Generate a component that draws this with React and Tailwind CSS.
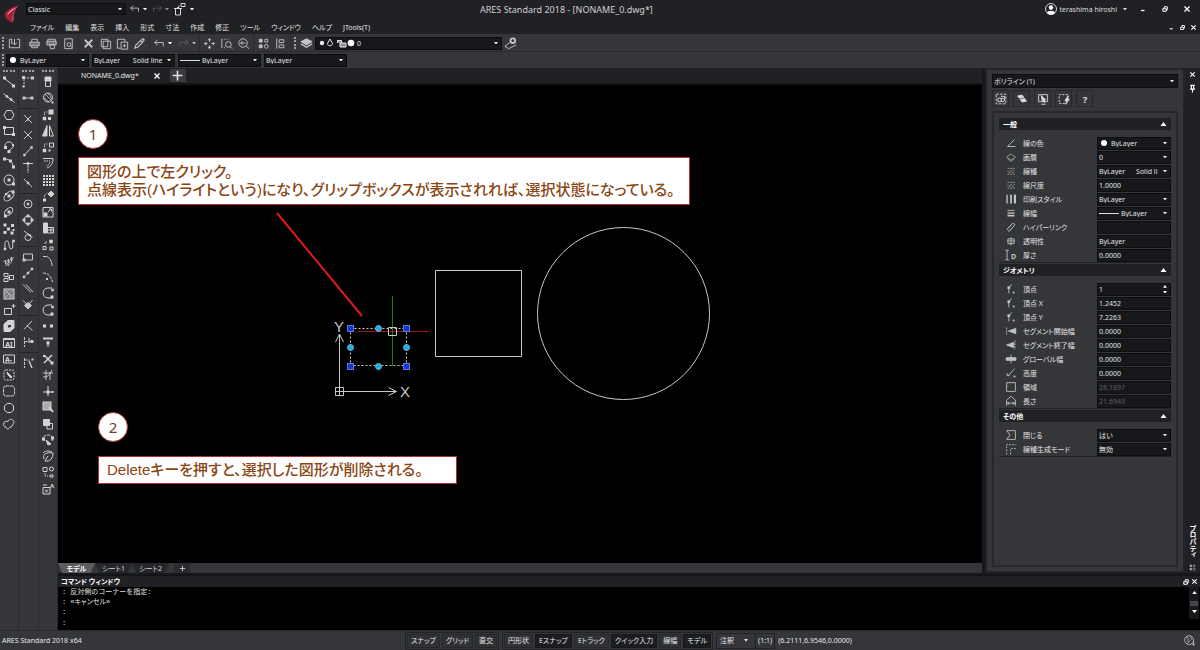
import { useState } from 'react';

const UI = "font-['Noto_Sans','Noto_Sans_CJK_JP',sans-serif]";
const PALT = "[font-feature-settings:'palt']";

const Dot = ({ x, y, s = 3 }) => <rect x={x - s / 2} y={y - s / 2} width={s} height={s} fill="currentColor" stroke="none" />;

const ICONS = {
  // draw
  line: <><path d="M3 4l10 8" /><Dot x={3.5} y={4} /><Dot x={12.5} y={12} /></>,
  xline: <><path d="M2.500 3.500l11 9" /><Dot x={6} y={6.500} s={2.500} /><Dot x={10} y={9.500} s={2.500} /></>,
  polygon: <path d="M5.500 3.500h5l2.500 4.500-2.500 4.500h-5L3 8z" />,
  rect: <><path d="M3.500 4.500h9v7h-9z" /><Dot x={3.5} y={4.5} /><Dot x={12.5} y={11.5} /></>,
  polyline: <><path d="M4.500 8C3 5 5.500 3 8 3s5 2 4 5c-.6 2-3 1.500-3 3.500L7.500 12" /><Dot x={4.5} y={8.5} /><Dot x={8} y={12.5} /><Dot x={12} y={6} s={2} /></>,
  arc: <><path d="M4 4c4 0 8 3 8 8" /><Dot x={3.5} y={4} /><Dot x={9.5} y={6} /><Dot x={12.5} y={12} /></>,
  circle: <><circle cx="8" cy="8" r="5" /><Dot x={8} y={8} /><Dot x={12.5} y={12} /></>,
  ellipse: <><ellipse cx="8" cy="8" rx="6" ry="3.500" transform="rotate(-45 8 8)" /><Dot x={8} y={8} /><Dot x={12} y={4} /><Dot x={5} y={6} s={2} /></>,
  ellipseArc: <><ellipse cx="8" cy="7.500" rx="5" ry="3" transform="rotate(-45 8 8)" /><Dot x={8} y={8} /><Dot x={4.5} y={12} /></>,
  points: <><Dot x={4} y={4} /><Dot x={11.5} y={4.5} /><Dot x={7.5} y={8} /><Dot x={4} y={11.5} /><Dot x={12.5} y={9} s={2} /><Dot x={11} y={12} /></>,
  spline: <><path d="M4 12c0-4-1-8 2-8s1 8 4 8 1-6 2-8" /><Dot x={4} y={12} s={2.5} /><Dot x={12.5} y={4} s={2.5} /></>,
  zigzag: <path d="M2.500 9l2-2 0 4 3-5 0 4 3-6 0 4 2-4M4 13l3-3 0 3 4-5" strokeWidth=".8" />,
  block: <><path d="M3 4.500h4v3H3zM3 9.500h4v3H3zM8.500 6.500h4v4h-4zM7 8.500h2" /></>,
  hatch: <><rect x="3" y="3" width="10" height="10" fill="#77787a" /><path d="M4 12l8-8M4 8l4-4M8 12l4-4M4 4l8 8" strokeWidth=".6" /></>,
  boundary: <><path d="M3.500 6.500h7v6h-7z" /><path d="M10.500 4h4M12.500 2v4" /></>,
  region: <path d="M3 6l4-3.500h6V10l-4 3.500H3zM6.500 7v3h2.500l1.500-1.500v-2H8z" fill="currentColor" fillRule="evenodd" />,
  text: <><path d="M2.500 3.500h11v9h-11zM2.500 4.500h11" /><text x="8" y="11.500" fontSize="7" fontWeight="700" textAnchor="middle" fill="currentColor" stroke="none">AI</text></>,
  note: <><path d="M2.500 4h11v8h-11z" /><text x="7.500" y="10.500" fontSize="7" fontWeight="700" textAnchor="middle" fill="currentColor" stroke="none">A-</text></>,
  edit: <><rect x="3" y="3" width="10" height="10" rx="2" strokeDasharray="2 1" /><path d="M6 5l1 3 3 3 1-1-3-3z" fill="currentColor" /></>,
  cloudRect: <rect x="2.500" y="3" width="11" height="10" rx="2.500" strokeDasharray="3.500 .7" />,
  cloudCircle: <path d="M6 3.500h4L12.500 6v4L10 12.500H6L3.500 10V6z" strokeLinejoin="round" />,
  cloudFree: <path d="M3 7c0-2 3-2 4-1.500C8 3 10 2.500 11.500 4 14 5 13 7 12 8c0 2-1.500 3-3 3-1 2.500-3.500 2.500-4 0C2.500 11 2 8.500 3 7z" />,
  // snaps
  track: <><path d="M4 4h8M4 5v8" strokeDasharray="2 1" /><Dot x={3.5} y={3.5} /><Dot x={12.5} y={4} /><Dot x={3.5} y={12.5} s={2} /></>,
  end: <><path d="M4 8h8" /><Dot x={4} y={8} /><Dot x={12} y={8} /></>,
  snapX: <><path d="M4 4l8 8M11 5l-6 6" /><Dot x={8} y={8.500} s={2} /></>,
  cross: <path d="M4 4l8 8M12 4l-8 8" />,
  mid: <><path d="M5 11.500L11 5" /><Dot x={4.5} y={12} s={2.5} /><Dot x={11.5} y={4.500} s={2.500} /></>,
  perp: <><path d="M3 4.500h10" /><path d="M8 3v11" strokeDasharray="2.500 .8" /><Dot x={8} y={4.5} s={2.5} /></>,
  near: <><path d="M4 4l8 8" /><Dot x={8} y={8} s={2.5} /></>,
  center: <><circle cx="8" cy="8" r="4" /><Dot x={8} y={8} s={2.5} /></>,
  quad: <><circle cx="8" cy="8" r="4" /><Dot x={8} y={4} /><Dot x={8} y={12} /><Dot x={4} y={8} /><Dot x={12} y={8} /></>,
  tangent: <><circle cx="8" cy="9.500" r="3" /><path d="M4 3l8.500 6" /><Dot x={9.500} y={7} s={2} /></>,
  insert: <><path d="M3.500 5h9v6h-9z" /><Dot x={4} y={11} /></>,
  node: <><path d="M4 12l8-8" strokeDasharray="2 1" /><Dot x={4} y={12} s={2.5} /><Dot x={8} y={8} s={2.5} /><Dot x={12} y={4} s={2.500} /></>,
  parallel: <path d="M3 3.500l8 8M6 3.500l7 7.500" />,
  apparent: <><path d="M3 3.500l5 5 4.500-5.500" /><path d="M8 5.500l3.500 3L8 12 4.500 8.500z" fill="currentColor" /></>,
  angle: <path d="M12 3L4 11.500M6.500 7l6 5.500" />,
  coordA: <><path d="M4.500 3v10M9 4v5M4.500 7.500H13" strokeDasharray="3 1" /><Dot x={12} y={7.5} /></>,
  coordB: <><path d="M4.500 3v10M4.500 5h5" strokeDasharray="3 1" /><path d="M9 6l3 7" strokeWidth="1.500" /><Dot x={12.5} y={4.500} s={2} /></>,
  // modify
  erase: <><path d="M5.500 3.500h5v9h-5z" /><path d="M5 3h6v4H5z" fill="currentColor" /></>,
  explode: <><circle cx="8" cy="7.500" r="4.500" /><path d="M5 4l7 7M8 3l4 6M4 8l5 4" strokeWidth=".8" /><Dot x={12.5} y={12.5} s={2} /></>,
  copyA: <><Dot x={11} y={5} s={5} /><Dot x={4.500} y={11.500} s={3.500} /><path d="M4.500 8V5h3" strokeDasharray="1.500 1" /><Dot x={9.500} y={11.500} s={3} /></>,
  mirror: <><path d="M7 2.500v10.500H2.500z" fill="currentColor" /><path d="M9.500 2.500v10.500H13.500z" /></>,
  copyB: <><path d="M9.500 4h4v4h-4z" /><Dot x={4.500} y={11.500} s={3.500} /><path d="M4.500 8V5h3" strokeDasharray="1.500 1" /><Dot x={9.500} y={11.500} s={2} /></>,
  offset: <><path d="M3 3.500h10c0 5-2 8-6 9.500" /><path d="M4 6h6c0 3-1 4-4 5" strokeDasharray="1.500 1" /></>,
  pattern: <path d="M3 4h11M3 7h11M3 10h11M3 13h11" strokeWidth="2" strokeDasharray="2 1" />,
  rotate: <><path d="M11 3l3 3-3 3-3-3z" fill="currentColor" /><Dot x={4.5} y={12} s={3} /><path d="M4.500 9c0-2 1-3.500 3-4" strokeDasharray="1.500 1" /></>,
  scale: <><path d="M3 3.500h10v9.500H3z" /><Dot x={5.5} y={10.5} s={4} /><path d="M8 8l3-3M9 5h2.500v2.500" /></>,
  stretch: <><path d="M3.500 3h4v10h-4z" fill="currentColor" /><path d="M8 7.500h5.500V13H8M8 10h5M11 8v5" /></>,
  group: <><Dot x={11} y={4.500} s={3.500} /><path d="M3 9.500h3v3H3zM10 10h3v3h-3z" /><path d="M5 7V5h3" strokeDasharray="1.500 1" /></>,
  fillet: <path d="M3 3.500h2c4 0 6 3 7 8v1.500" />,
  filletDot: <><path d="M3 4c5 0 8 3 9.500 9" strokeDasharray="3 1" /><Dot x={7} y={10} s={2} /></>,
  open: <><path d="M12 3H8C1.500 3 1.500 13 8 13h4" /><Dot x={12.500} y={5} s={2.500} /><Dot x={12} y={12} /></>,
  joinDots: <><path d="M4 8h2M10 8h2" /><Dot x={4.500} y={8} s={3} /><Dot x={11.500} y={8} s={3} /></>,
  extend: <><path d="M3 4.500h10" strokeWidth="2" /><path d="M8 7v6" /><Dot x={8} y={9} s={3} /></>,
  trim: <><path d="M4 4l8 8M12 4l-8 8" strokeWidth="1.500" /><Dot x={4} y={5} s={2} /><Dot x={12} y={12} /></>,
  weld: <path d="M3 6h10M3 10c5 0 7-2 9-7M6 13V3M10 13V5" strokeWidth=".9" />,
  split: <><path d="M8 3v10M3 9h9" /><Dot x={8} y={9} /><Dot x={12.5} y={9} s={2} /></>,
  select: <><rect x="3" y="3" width="8" height="8" fill="#aaa" /><path d="M9 8l4 5" strokeWidth="2" /></>,
  overlap: <><path d="M3.500 3.500h6v6h-6z" fill="currentColor" /><path d="M10 7.500h2.500V13H7v-3" /></>,
  lasso: <><path d="M4 9C2 5 5 3 8 3s6 2 4 6" strokeDasharray="3 1" /><path d="M6 8l5 4-3 1z" fill="currentColor" /><Dot x={3.500} y={7} /><Dot x={12.500} y={6} /></>,
  leaf: <path d="M4 11c-2-5 3-7 9-6 0 5-3 9-8 8l3-5M3 5c3-3 7-2 9-1" />,
  shapes: <><path d="M3 3.500h4v4H3zM10 11h3v2h-3z" /><circle cx="11.500" cy="5" r="2" /><path d="M5 9v3h3" strokeDasharray="1.500 1" /></>,
  attr: <><path d="M3 6.500h7V13H3zM3 4h4" /><path d="M5 8.500l3 3M8 8.500l-3 3" /><text x="12" y="7" fontSize="6" fontWeight="700" textAnchor="middle" fill="currentColor" stroke="none">A</text></>,
  // toolbar
  openFile: <path d="M5.500 3.500h-3v9h11v-9h-3M8 3v6M5.500 7L8 9.500 10.500 7M5 3.500v5" />,
  print: <><path d="M5 6V3.500h6V6M5 12.500h6V10H5z" /><path d="M3 6.500h10v4H3z" fill="#77787a" /></>,
  plot: <><path d="M4 3.500h8v3H4z" /><path d="M3 5.500h10v4H3z" fill="#77787a" /><path d="M6 9.500h5v4H7z" /></>,
  preview: <><path d="M4 3h8v10.500H4z" /><circle cx="8.500" cy="9" r="2" /><path d="M10 10.500l2 2" /></>,
  cut: <><path d="M4 4l8 8M12 4l-8 8" strokeWidth="2" /></>,
  copy: <><path d="M3.500 3.500h7v8h-7zM5.500 5.500h8v8h-8z" /></>,
  paste: <><path d="M6 13H2.500V3.500h8V6M6.500 6.500h7v7.500h-7zM10 8.500v3.500M8.500 10.500h3.500" /></>,
  brush: <path d="M3 13l1-3 5-5 3-2 1 1-2 3-5 5zM9 5l2 2" strokeWidth="1.200" />,
  undo: <path d="M6 4L3 7l3 3M3 7h9v4" />,
  redo: <path d="M10 4l3 3-3 3M13 7H4v4" strokeDasharray="2 1" />,
  pan: <><path d="M8 2l2 2.500H6zM8 14l2-2.500H6zM2 8l2.500-2v4zM14 8l-2.500-2v4z" fill="currentColor" stroke="none" /><path d="M8 4v2M8 10v2M4 8h2M10 8h2" /></>,
  zoomWin: <><circle cx="10" cy="9" r="3" /><path d="M3 3.500v9M12 11.500l2 2" /><path d="M3 3.500h8M3 12.500h4" strokeDasharray="1 1.500" /></>,
  zoomPrev: <><circle cx="7.500" cy="7.500" r="4.500" /><path d="M5 7.500h5M7 5.500l-2 2 2 2M11 11l3 2.500" /></>,
  tools: <><path d="M3.500 3.500h3v3h-3zM3.500 9.500h3v3h-3z" fill="currentColor" /><path d="M9.500 3.500h3v3h-3z" /><circle cx="11" cy="11" r="2" /></>,
  align: <path d="M4 2.500v11M6.500 4h5v3h-5zM6.500 9.500h5v3h-5z" />,
  layers: <><path d="M8 3l6 3-6 3.500L2 6z" fill="currentColor" /><path d="M2 8.500L8 12l6-3.500" strokeWidth="1.500" /></>,
  layerGear: <><circle cx="10.500" cy="5" r="2.500" strokeWidth="2" /><path d="M7 7l-5 4 4 2.500 8-4" /></>,
  customize: <><path d="M10 2.500h4v3h-4zM8 4.500V6M3 7.500h8M4.500 8v6h5V8M6 6.500h2" /></>,
  globe: <><circle cx="7.500" cy="7.500" r="5.500" /><path d="M4 5c3-2 3 1 2 3s2 2 3 0M9 3l2 4M13 8v6M11 12l2 2 2-2M5 12l2-2" /></>,
  // properties
  color: <path d="M12 4L4 12h9" />,
  layer: <path d="M8 4.500L13 8l-5 3.500L3 8zM4 10l4 3 4-3" strokeWidth=".7" />,
  ltype: <path d="M4 5h9M4 8l2 2 2-3 2 3 2-3M4 11.500h9" strokeDasharray="2 1" strokeWidth=".8" />,
  pstyle: <><path d="M3.500 3v10" strokeWidth="1.500" /><path d="M8 3v10" strokeWidth="2" /><path d="M12.500 3v10" strokeWidth="2.500" /></>,
  lweight: <><path d="M4 5h8" /><path d="M4 8h8" strokeWidth="1.500" /><path d="M4 11h8" strokeWidth="2" /></>,
  link: <path d="M5 9l5-5.500 2.500 2L7.500 11M8 6L3.500 10.500 6 13l2.500-3" />,
  transp: <path d="M4.500 5.500h7v5.500h-7zM8 4v9M3.500 8h9" />,
  thick: <><path d="M3.500 2.500v11M1.500 2.500h4M1.500 13.500h4" /><text x="11" y="12" fontSize="8" fontWeight="700" textAnchor="middle" fill="currentColor" stroke="none">D</text></>,
  vertex: <><path d="M5.500 13V6L9 3" /><Dot x={5.5} y={6.500} s={3} /><Dot x={11} y={12} s={2} /></>,
  segStart: <><path d="M13.500 5v6L5 8z" fill="currentColor" /><path d="M3 4v8" strokeDasharray="2 1" /></>,
  segEnd: <><path d="M11 5v6L3 8z" fill="currentColor" /><path d="M12.500 3v10" strokeDasharray="2 1" /></>,
  gwidth: <><path d="M2.500 6.500h11v3h-11z" fill="currentColor" /><path d="M8 3v10" /></>,
  elev: <><path d="M12 3L5 11M3.500 8v3h3" /><Dot x={12} y={12} s={2} /></>,
  area: <path d="M3 3h10v10H3z" />,
  length: <path d="M3 13.500V7l5-4.500L13 7v6.500M3 10.500h10M6 9l-2 1.500 2 1.500M10 9l2 1.500-2 1.500" />,
  closed: <path d="M3 3h10v10H3l4-5z" />,
  lgen: <path d="M3 14V3h11M7.500 14V7.500H14" strokeDasharray="2 1.500" />,
  selAdd: <><path d="M2.500 2.500h11v11h-11z" strokeDasharray="3 1.500" /><path d="M4.500 7h4v4h-4zM8 5h4v4" /><circle cx="10" cy="9" r="2" /></>,
  selPoly: <><path d="M3 4.500l5-1 2 2.500-5 1z" fill="currentColor" /><path d="M6 8.500l5-1 2 3-5 1z" fill="currentColor" /></>,
  selWin: <><path d="M3 3h10v8H3zM6 14h5" /><path d="M6 4l5 5-2 1 1 2-3-2z" fill="currentColor" /></>,
  selQuick: <><path d="M9 13H2.500V3H13v2" strokeDasharray="2.500 1.500" /><path d="M12 5l-3 5h2l-1 4 4-6h-2l1-3z" fill="currentColor" /></>,
  help: <text x="8" y="12" fontSize="11" fontWeight="700" textAnchor="middle" fill="currentColor" stroke="none">?</text>,
  // window
  min: <path d="M4 11h7" strokeWidth="2.500" />,
  restore: <path d="M3.500 7.500h7v5h-7zM6.500 7V3.500h6v6H10" strokeWidth="2" />,
  close: <path d="M3 3l10 10M13 3L3 13" strokeWidth="2.500" />,
  pin: <path d="M4 2.500h8M6 3v6M10 3v6M3.500 9h9M8 9v6" strokeWidth="2" />,
  plus: <path d="M8 2v12M2 8h12" strokeWidth="2" />,
};

function Icon({ name, className = 'size-4 text-[#c2c3c5]' }) {
  return (
    <svg viewBox="0 0 16 16" className={`shrink-0 ${className}`} fill="none" stroke="currentColor" strokeWidth="1" aria-hidden="true">
      {ICONS[name]}
    </svg>
  );
}

function Caret({ up, className = 'w-1 text-[#e4e4e4]' }) {
  return (
    <svg viewBox="0 0 6 4" className={`shrink-0 ${className}`} fill="currentColor" aria-hidden="true">
      <path d={up ? 'M0 4l3-4 3 4z' : 'M0 0h6L3 4z'} />
    </svg>
  );
}

function IconButton({ name, label, className = 'w-[17px]', icon = 'size-[15px] text-[#c2c3c5]' }) {
  return (
    <button type="button" aria-label={label || name} className={`flex shrink-0 items-center justify-center ${className}`}>
      <Icon name={name} className={icon} />
    </button>
  );
}

function Combo({ id, label, value, prefix, className = '' }) {
  return (
    <div className={`flex items-center gap-[2px] border border-[#0d0e10] bg-[#17181b] pr-[3px] pl-[1px] ${className}`}>
      {prefix}
      <select id={id} aria-label={label} className="min-w-0 flex-1 appearance-none overflow-hidden bg-transparent text-[#e2e2e2] outline-none">
        <option>{value}</option>
      </select>
      <Caret />
    </div>
  );
}

const Bullet = () => <span className="mr-[2px] ml-[2px] size-[6px] shrink-0 rounded-full bg-white" />;
const Rule = () => <span className="h-px w-5 shrink-0 bg-[#e0e0e0]" />;

function Grip() {
  return <span className="mr-[2px] ml-[2px] h-3 w-0 shrink-0 border-l-2 border-dotted border-[#a0a1a3]" />;
}

const MENUS = ['ファイル', '編集', '表示', '挿入', '形式', '寸法', '作成', '修正', 'ツール', 'ウィンドウ', 'ヘルプ', 'JTools(T)'];

function TitleBar() {
  return (
    <header className="flex h-[34px] bg-[#202124] pl-1">
      <svg viewBox="0 0 20 24" className="mt-1 h-5 w-4 shrink-0" aria-hidden="true">
        <path d="M19 1C9 3 1 8 1 13c0 4 4 8 10 10 0-3-1-5-1-8 0-5 4-9 9-14z" fill="#a81e36" />
        <path d="M17 3C10 6 5 9 4 14c2-3 6-6 13-11z" fill="#f0b0b8" />
        <path d="M11 22c-1-5-2-10 5-18-3 5-5 10-4 15z" fill="#e35a6c" />
      </svg>
      <div className="flex min-w-0 flex-1 flex-col pl-[6px]">
        <div className="flex h-[18px] items-center">
          <div className="flex w-[454px] shrink-0 items-center text-[7px]">
            <Combo label="ワークスペース" value="Classic" className="h-[12px] w-[100px]" />
            <IconButton name="undo" label="元に戻す" className="ml-[2px] w-[14px]" icon="size-[14px] text-[#c2c3c5]" />
            <Caret className="ml-[1px] w-1 text-white" />
            <IconButton name="redo" label="やり直し" className="ml-[2px] w-[15px]" icon="size-[14px] text-[#6a6b6e]" />
            <Caret className="ml-[1px] w-1 text-[#8a8b8e]" />
            <IconButton name="customize" label="カスタマイズ" className="ml-[2px] w-[16px]" icon="size-4 text-[#d8d8d8]" />
            <Caret className="ml-[3px] w-1 text-white" />
          </div>
          <h1 className="flex-1 text-[9px] text-[#d0d0d2]">ARES Standard 2018 - [NONAME_0.dwg*]</h1>
          <button type="button" className="mr-[11px] flex items-center gap-[2px] text-[7px] text-[#dcdcdc]">
            <svg viewBox="0 0 12 12" className="size-3" aria-hidden="true">
              <circle cx="6" cy="6" r="5.500" fill="#202124" stroke="#d0d0d0" />
              <circle cx="6" cy="4.500" r="2.200" fill="#fff" />
              <path d="M2 10c0-3 8-3 8 0-2 2-6 2-8 0z" fill="#fff" />
            </svg>
            <span>terashima hiroshi</span>
            <Caret className="ml-1 w-1" />
          </button>
          <div className="flex gap-3 pr-2">
            {['min', 'restore', 'close'].map(n => <IconButton key={n} name={n} className="w-[10px]" icon="size-2 text-white" />)}
          </div>
        </div>
        <nav className="flex h-4 items-center pt-[2px] pl-1">
          <ul className="flex flex-1 gap-[11px] text-[7px] text-[#e2e2e2]">
            {MENUS.map(m => <li key={m}><button type="button">{m}</button></li>)}
          </ul>
          <div className="flex gap-[1px] pr-[2px]">
            {['min', 'restore', 'close'].map(n => <IconButton key={n} name={n} label={`図面 ${n}`} className="w-[10px]" icon="size-[7px] text-white" />)}
          </div>
        </nav>
      </div>
    </header>
  );
}

function ToolGroup({ names }) {
  return (
    <div className="mr-[1px] flex h-full shrink-0 items-center border-r border-[#2a2b2e] pr-[1px]">
      {names.map(n => <IconButton key={n} name={n} />)}
    </div>
  );
}

function Toolbars() {
  return (
    <div className="bg-[#35363a]">
      <div className="flex h-[18px] items-center border-b border-[#2a2b2e] pt-[1px]">
        <Grip />
        <ToolGroup names={['openFile']} />
        <ToolGroup names={['print', 'plot', 'preview']} />
        <ToolGroup names={['cut', 'copy', 'paste', 'brush']} />
        <div className="mr-[1px] flex h-full items-center border-r border-[#2a2b2e] pr-[3px]">
          <IconButton name="undo" label="元に戻す" />
          <Caret className="w-1 text-white" />
          <IconButton name="redo" label="やり直し" className="ml-[3px] w-[17px]" icon="size-[15px] text-[#6c6d70]" />
          <Caret className="w-1 text-[#b0b0b0]" />
        </div>
        <ToolGroup names={['pan', 'zoomWin', 'zoomPrev']} />
        <ToolGroup names={['tools', 'align']} />
        <Grip />
        <IconButton name="layers" label="画層" />
        <Combo
          label="画層"
          value="0"
          className="h-[13px] w-[187px] text-[7px]"
          prefix={
            <svg viewBox="0 0 36 10" className="ml-[2px] h-[10px] w-9 shrink-0 text-[#e8e8e8]" fill="none" stroke="currentColor" aria-hidden="true">
              <circle cx="3" cy="5" r="2.200" fill="currentColor" stroke="none" />
              <path d="M11 1l2.500 4.500c0 3-5 3-5 0z" />
              <path d="M21 5h6v4h-6zM18.500 5V2.500h4V5" fill="#8a8b8e" />
              <circle cx="32" cy="5" r="3.300" fill="#fff" stroke="none" />
            </svg>
          }
        />
        <IconButton name="layerGear" label="画層設定" />
      </div>
      <div className="flex h-4 items-center gap-[3px] text-[7px]">
        <div className="flex items-center">
          <Grip />
          <Combo label="線の色" value="ByLayer" prefix={<Bullet />} className="h-[13px] w-[83px]" />
        </div>
        <Combo label="線種" value={'ByLayer\u00a0\u00a0\u00a0\u00a0\u00a0\u00a0\u00a0Solid line'} className="h-[13px] w-[83px]" />
        <Combo label="線幅" value="ByLayer" prefix={<Rule />} className="h-[13px] w-[83px]" />
        <Combo label="印刷スタイル" value="ByLayer" className="h-[13px] w-[83px]" />
      </div>
    </div>
  );
}

const DRAW = ['line', 'xline', 'polygon', 'rect', 'polyline', 'arc', 'circle', 'ellipse', 'ellipseArc', 'points', 'spline', 'zigzag', 'block', 'hatch', 'boundary', 'region', 'text', 'note', 'edit', 'cloudRect', 'cloudCircle', 'cloudFree'];
const SNAPS = [
  ['track', 'end'],
  ['snapX', 'cross', 'mid', 'perp', 'near'],
  ['center', 'quad', 'tangent'],
  ['insert', 'node', 'parallel', 'apparent'],
  ['angle', 'coordA'],
  ['coordB'],
];
const MODIFY = ['erase', 'explode', 'copyA', 'mirror', 'copyB', 'offset', 'pattern', 'rotate', 'scale', 'stretch', 'group', 'fillet', 'filletDot', 'open', 'open', 'joinDots', 'extend', 'trim', 'weld', 'split', 'select', 'overlap', 'lasso', 'leaf', 'shapes', 'attr'];

function ToolColumn({ children }) {
  return (
    <div className="flex flex-1 flex-col items-center border-r border-[#2a2b2e] pt-[2px]">
      <span className="mb-[2px] w-3 border-t-2 border-dotted border-[#a0a1a3]" />
      {children}
    </div>
  );
}

function ToolPalette() {
  return (
    <aside className="flex w-[58px] shrink-0 bg-[#35363a]">
      <ToolColumn>
        <div className="flex h-[358px] flex-col justify-between">
          {DRAW.map(n => <IconButton key={n} name={n} icon="size-4 text-[#d2d3d5]" />)}
        </div>
      </ToolColumn>
      <ToolColumn>
        {SNAPS.map((group, i) => (
          <div key={i} className={`flex w-full flex-col items-center py-[2px] first-of-type:pt-0 ${i < SNAPS.length - 1 ? 'border-b border-[#232427]' : ''}`}>
            {group.map(n => <IconButton key={n} name={n} icon="size-4 text-[#c8c9cb]" />)}
          </div>
        ))}
      </ToolColumn>
      <ToolColumn>
        <div className="flex h-[423px] flex-col justify-between">
          {MODIFY.map((n, i) => <IconButton key={i} name={n} icon="size-4 text-[#d2d3d5]" />)}
        </div>
      </ToolColumn>
    </aside>
  );
}

const GRIPS = [[350, 328], [406, 328], [350, 366], [406, 366]];
const MIDS = [[378, 328], [350, 347], [406, 347], [378, 366]];

function Drawing() {
  return (
    <svg viewBox="58 85 924 478" width="924" height="478" className="absolute top-0 left-0" fill="none" stroke="#c8c8c8">
      <path d="M435.500 270.500h86v86h-86z" />
      <circle cx="623.500" cy="313.500" r="86" />
      <path d="M350.500 328.500h56v37h-56z" strokeDasharray="2 2" />
      <path d="M339.500 387v-52M335.500 342l4-8 4 8M344 391.500h52M388.500 387.500l8 4-8 4" />
      <path d="M335.500 387.500h8v8h-8zM339.500 387v9M335 391.500h9" />
      <g className="font-['Liberation_Sans',sans-serif]" fontSize="15" fill="#c8c8c8" stroke="none" textAnchor="middle">
        <text x="339" y="332">Y</text>
        <text x="405" y="397">X</text>
      </g>
      <path d="M358 331.500h70" stroke="#9c1414" />
      <path d="M392.500 296v70" stroke="#0c8a10" />
      {GRIPS.map(([x, y]) => <rect key={`${x}${y}`} x={x - 2.5} y={y - 2.5} width="6" height="6" fill="#1238d0" stroke="#5b74de" />)}
      {MIDS.map(([x, y]) => <circle key={`${x}${y}`} cx={x + 0.5} cy={y + 0.5} r="3" fill="#2fa9dc" stroke="#58bce4" />)}
      <path d="M388.500 327.500h8v8h-8z" />
      <path d="M277 213l85 103" stroke="#e01a1a" strokeWidth="2" />
    </svg>
  );
}

function Badge({ n, className }) {
  return (
    <span className={`absolute flex size-[30px] items-center justify-center rounded-full border border-[#b23030] bg-white text-[15px] text-[#6b4226] ${className}`}>{n}</span>
  );
}

function Callout({ className, children }) {
  return (
    <div className={`absolute border border-[#b23030] bg-white px-2 font-['Liberation_Sans','Noto_Sans_CJK_JP',sans-serif] text-[15px] leading-[18px] font-medium whitespace-nowrap text-[#8a4513] ${className}`}>
      {children}
    </div>
  );
}

function Canvas() {
  return (
    <div className="relative min-h-0 flex-1 overflow-hidden bg-black">
      <Drawing />
      <Badge n="1" className="top-[34px] left-5" />
      <Callout className="top-[72px] left-5 w-[612px] py-[5px]">
        <p>図形の上で左クリック。</p>
        <p>点線表示(ハイライトという)になり、グリップボックスが表示されれば、選択状態になっている。</p>
      </Callout>
      <Badge n="2" className="top-[327px] left-10" />
      <Callout className="top-[371px] left-10 w-[359px] py-1">
        <p>Deleteキーを押すと、選択した図形が削除される。</p>
      </Callout>
    </div>
  );
}

function SheetTabs() {
  const [active, setActive] = useState('モデル');
  return (
    <div className="flex h-[10px] shrink-0 items-center bg-[#35363a] text-[7px] leading-[9px]">
      {['モデル', 'シート1', 'シート2'].map(t => (
        <button
          key={t}
          type="button"
          onClick={() => setActive(t)}
          className={`h-full w-[37px] [clip-path:polygon(0_0,100%_0,88%_100%,12%_100%)] ${t === active ? 'bg-[#5c5d60] font-bold text-white' : 'bg-[#25262a] text-[#d8d8d8]'}`}
        >
          {t}
        </button>
      ))}
      <button type="button" aria-label="シートを追加" className="ml-[5px] flex h-full w-4 items-center justify-center bg-[#2a2b2e]">
        <Icon name="plus" className="size-[7px] text-[#d0d0d0]" />
      </button>
    </div>
  );
}

function Document() {
  return (
    <main className="flex min-w-0 flex-1 flex-col">
      <div className="flex h-[17px] shrink-0 items-center border-b-2 border-[#131416] bg-[#202124]">
        <button type="button" className="ml-[23px] text-[7px] text-[#e6e6e6]">NONAME_0.dwg*</button>
        <IconButton name="close" label="図面を閉じる" className="ml-[10px] w-4" icon="size-2 text-white" />
        <button type="button" aria-label="新規図面" className="ml-[5px] flex h-[13px] w-4 items-center justify-center bg-[#3a3b3f]">
          <Icon name="plus" className="size-[13px] text-[#e0e0e0]" />
        </button>
      </div>
      <Canvas />
      <SheetTabs />
    </main>
  );
}

const SECTIONS = [
  {
    title: '一般',
    rows: [
      { icon: 'color', label: '線の色', value: 'ByLayer', kind: 'select', prefix: <Bullet /> },
      { icon: 'layer', label: '画層', value: '0', kind: 'select' },
      { icon: 'ltype', label: '線種', value: 'ByLayer\u00a0\u00a0\u00a0\u00a0\u00a0\u00a0Solid li', kind: 'select' },
      { icon: 'ltype', label: '線尺度', value: '1.0000' },
      { icon: 'pstyle', label: '印刷スタイル', value: 'ByLayer', kind: 'select' },
      { icon: 'lweight', label: '線幅', value: 'ByLayer', kind: 'select', prefix: <Rule /> },
      { icon: 'link', label: 'ハイパーリンク', value: '' },
      { icon: 'transp', label: '透明性', value: 'ByLayer' },
      { icon: 'thick', label: '厚さ', value: '0.0000' },
    ],
  },
  {
    title: 'ジオメトリ',
    rows: [
      { icon: 'vertex', label: '頂点', value: '1', kind: 'spin' },
      { icon: 'vertex', label: '頂点 X', value: '1.2452' },
      { icon: 'vertex', label: '頂点 Y', value: '7.2263' },
      { icon: 'segStart', label: 'セグメント開始幅', value: '0.0000' },
      { icon: 'segEnd', label: 'セグメント終了幅', value: '0.0000' },
      { icon: 'gwidth', label: 'グローバル幅', value: '0.0000' },
      { icon: 'elev', label: '高度', value: '0.0000' },
      { icon: 'area', label: '領域', value: '28.1897', disabled: true },
      { icon: 'length', label: '長さ', value: '21.6949', disabled: true },
    ],
  },
  {
    title: 'その他',
    rows: [
      { icon: 'closed', label: '閉じる', value: 'はい', kind: 'select' },
      { icon: 'lgen', label: '線種生成モード', value: '無効', kind: 'select' },
    ],
  },
];

function PropertyRow({ id, icon, label, value, kind, prefix, disabled }) {
  return (
    <div className="flex h-[14px] items-center">
      <Icon name={icon} className="mr-[5px] ml-[5px] size-[14px] text-[#c2c3c5]" />
      <label htmlFor={id} className="flex-1 whitespace-nowrap text-[#e2e2e2]">{label}</label>
      {kind === 'select' ? (
        <Combo id={id} value={value} prefix={prefix} className="h-[13px] w-[74px]" />
      ) : (
        <div className="flex h-[13px] w-[74px] items-center border border-[#0d0e10] bg-[#17181b] px-[1px]">
          <input id={id} defaultValue={value} disabled={disabled} className="w-full min-w-0 bg-transparent text-[#e2e2e2] outline-none disabled:text-[#5c5d60]" />
          {kind === 'spin' && <span className="flex flex-col gap-[3px] pr-[2px]"><Caret up className="w-1 text-white" /><Caret className="w-1 text-white" /></span>}
        </div>
      )}
    </div>
  );
}

function Properties() {
  return (
    <aside className="ml-[3px] flex w-[215px] shrink-0 text-[7px]">
      <div className="flex flex-1 flex-col border-2 border-[#232427] bg-[#35363a] px-[5px] pt-1 pb-1">
        <Combo label="選択" value="ポリライン (1)" className="h-[14px]" />
        <div className="flex gap-1 pt-[2px] pb-1">
          {['selAdd', 'selPoly', 'selWin', 'selQuick', 'help'].map(n => (
            <IconButton key={n} name={n} className="size-[17px] border border-[#27282b]" icon="size-[14px] text-[#dcdcdc]" />
          ))}
        </div>
        <div className="flex flex-1 flex-col gap-[1px] border-2 border-[#27282b] px-[5px] pt-[5px]">
          {SECTIONS.map((s, i) => (
            <section key={s.title} className="border-b border-[#202124]">
              <h2 className="flex h-3 items-center justify-between bg-[#202124] px-1 font-bold text-white">
                {s.title}
                <Caret up className="w-[7px] text-white" />
              </h2>
              <div className="pt-[6px]">
                {s.rows.map((r, j) => <PropertyRow key={r.label} id={`prop-${i}-${j}`} {...r} />)}
              </div>
            </section>
          ))}
        </div>
      </div>
      <div className="flex w-[15px] flex-col items-center gap-[6px] bg-[#202124] pt-[3px]">
        <IconButton name="close" label="パレットを閉じる" icon="size-[7px] text-white" />
        <IconButton name="pin" label="固定" icon="size-[9px] text-white" />
        <span className="mt-auto font-bold text-white [font-feature-settings:'vpal'] [writing-mode:vertical-rl]">プロパティ</span>
        <Icon name="tools" className="mb-[1px] size-[9px] text-[#b0b0b0]" />
      </div>
    </aside>
  );
}

function CommandWindow() {
  return (
    <section className="mt-[2px] shrink-0 bg-black text-[7px] text-[#e2e2e2]">
      <div className="flex h-3 items-center border-t border-[#131416] bg-[#202124] pr-[1px] pl-[3px]">
        <h2 className="flex-1 font-bold text-white">コマンド ウィンドウ</h2>
        <IconButton name="restore" label="フロート" className="w-[9px]" icon="size-2 text-white" />
        <IconButton name="close" label="コマンド ウィンドウを閉じる" className="w-[9px]" icon="size-[7px] text-white" />
      </div>
      <div className="flex h-[43px]">
        <div className="flex-1 pl-1 font-['Liberation_Mono','Noto_Sans_CJK_JP',monospace] [font-feature-settings:normal]">
          <p className="flex h-[10px] items-center gap-1"><span>:</span>反対側のコーナーを指定:</p>
          <p className="flex h-[10px] items-center gap-1"><span>:</span><span className="[font-feature-settings:'palt']">«キャンセル»</span></p>
          <p className="flex h-[10px] items-center">:</p>
          <label className="flex h-[13px] items-center gap-1">:<input aria-label="コマンド" className="flex-1 bg-transparent outline-none" /></label>
        </div>
        <div className="mr-[1px] flex h-8 w-[10px] flex-col items-center bg-[#17181b] py-1">
          <Caret up className="w-[5px] text-white" />
          <span className="mt-[7px] mb-1 h-[5px] w-2 bg-[#46474b]" />
          <Caret className="w-[5px] text-white" />
        </div>
      </div>
    </section>
  );
}

const MODES = [
  [['スナップ'], ['グリッド'], ['直交']],
  [['円形状'], ['Eスナップ', true], ['Eトラック'], ['クイック入力', true], ['線幅'], ['モデル', true]],
];

function StatusBar() {
  return (
    <footer className="flex h-5 shrink-0 items-center border-t border-[#2a2b2e] bg-[#35363a] text-[7px] text-[#e6e6e6]">
      <span className="w-1/3 pl-[2px]">ARES Standard 2018 x64</span>
      <div className="flex flex-1 items-center gap-[3px] pl-[5px]">
        {MODES.map((group, i) => (
          <div key={i} className="flex gap-[2px] border border-[#222326] p-px">
            {group.map(([label, on]) => (
              <button key={label} type="button" aria-pressed={!!on} className={`h-[14px] border px-[3px] whitespace-nowrap ${on ? 'border-[#17181b] bg-[#1c1d20]' : 'border-[#27282b] bg-[#303135]'}`}>{label}</button>
            ))}
          </div>
        ))}
        <div className="flex h-4 items-center border border-[#222326]">
          <button type="button" className="flex h-full items-center gap-[10px] px-[3px]">注釈<Caret /></button>
          <button type="button" className="ml-1 h-full border-l border-[#222326] px-[2px]">(1:1)</button>
        </div>
        <span>(6.2111,6.9546,0.0000)</span>
      </div>
      <IconButton name="globe" label="更新" className="mr-[3px] w-4" icon="size-[13px] text-[#c2c3c5]" />
    </footer>
  );
}

export default function App() {
  return (
    <div lang="ja" className={`flex h-screen flex-col overflow-hidden bg-[#17181b] text-[8px] leading-none ${UI} ${PALT}`}>
      <TitleBar />
      <Toolbars />
      <div className="flex min-h-0 flex-1">
        <ToolPalette />
        <div className="flex min-w-0 flex-1 flex-col">
          <div className="flex min-h-0 flex-1">
            <Document />
            <Properties />
          </div>
          <CommandWindow />
        </div>
      </div>
      <StatusBar />
    </div>
  );
}
